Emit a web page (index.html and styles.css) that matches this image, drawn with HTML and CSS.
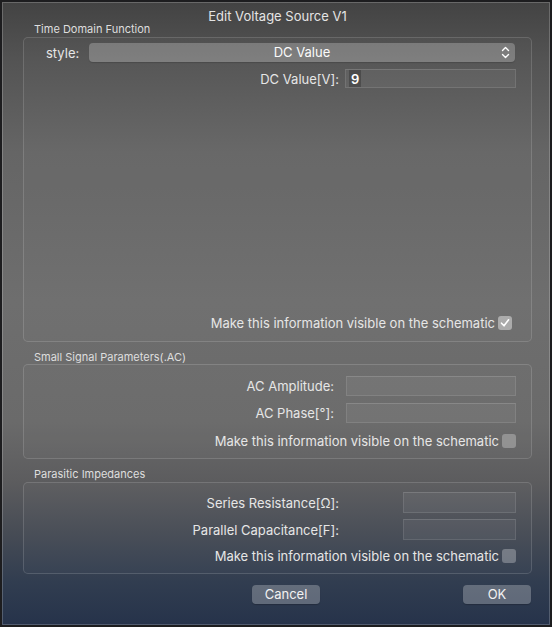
FILE: index.html
```html
<!DOCTYPE html>
<html lang="en">
    <head>
        <meta charset="utf-8">
        <title>Edit Voltage Source V1</title>
        <link rel="stylesheet" href="styles.css">
    </head>
    <body>
        <div class="window">
            <div class="title">Edit Voltage Source V1</div>

            <div class="group-label">Time Domain Function</div>
            <div class="group group-time">
                <div class="row-style">
                    <span class="style-label">style:</span>
                    <div class="popup">
                        DC Value
                        <svg class="chevrons" width="9" height="13" viewBox="0 0 9 13">
                            <path d="M1.5 4.5 L4.5 1.5 L7.5 4.5 M1.5 8.5 L4.5 11.5 L7.5 8.5" fill="none" stroke="#fff" stroke-width="1.4" stroke-linecap="round" stroke-linejoin="round"/>
                        </svg>
                    </div>
                </div>
                <div class="row row-dc">
                    <span class="label">DC Value[V]:</span>
                    <div class="field field-dc"><span class="sel">9</span></div>
                </div>
                <div class="check-row check-first">
                    <span>Make this information visible on the schematic</span>
                    <span class="checkbox checked">
                        <svg width="10" height="10" viewBox="0 0 10 10">
                            <path d="M1.5 5.2 L4 7.8 L8.6 1.8" fill="none" stroke="#fff" stroke-width="1.6" stroke-linecap="round" stroke-linejoin="round"/>
                        </svg>
                    </span>
                </div>
            </div>

            <div class="group-label">Small Signal Parameters(.AC)</div>
            <div class="group group-ac">
                <div class="row">
                    <span class="label">AC Amplitude:</span>
                    <div class="field field-ac"></div>
                </div>
                <div class="row row-next">
                    <span class="label">AC Phase[°]:</span>
                    <div class="field field-ac"></div>
                </div>
                <div class="check-row">
                    <span>Make this information visible on the schematic</span>
                    <span class="checkbox"></span>
                </div>
            </div>

            <div class="group-label">Parasitic Impedances</div>
            <div class="group group-par">
                <div class="row">
                    <span class="label label-par">Series Resistance[Ω]:</span>
                    <div class="field field-par"></div>
                </div>
                <div class="row row-next">
                    <span class="label label-par">Parallel Capacitance[F]:</span>
                    <div class="field field-par"></div>
                </div>
                <div class="check-row">
                    <span>Make this information visible on the schematic</span>
                    <span class="checkbox"></span>
                </div>
            </div>

            <div class="buttons">
                <div class="button cancel">Cancel</div>
                <div class="button ok">OK</div>
            </div>
        </div>
    </body>
</html>
```

FILE: styles.css
```css
body {
    margin: 0;
    font-family: Inter, "Liberation Sans", Arial, sans-serif;
    color: #e6e6e6;
}

.window {
    box-sizing: border-box;
    width: 552px;
    height: 627px;
    padding: 0 18px 0 21px;
    border: 2px solid #1d1d1f;
    box-shadow: inset 0 0 0 1px rgba(255, 255, 255, 0.2);
    background: linear-gradient(to bottom,
        #434343 0,
        #545454 60px,
        #656565 150px,
        #6e6e6e 300px,
        #6a6a6a 420px,
        #5c5c5e 480px,
        #474c55 530px,
        #313d50 580px,
        #25324a 627px);
    display: flex;
    flex-direction: column;
}

.title {
    margin-top: 7px;
    height: 14px;
    line-height: 14px;
    font-size: 13px;
    text-align: center;
    color: #e4e4e4;
}

.group-label {
    height: 12px;
    line-height: 12px;
    font-size: 11px;
    padding-left: 11px;
    margin-bottom: 2px;
    color: #dedede;
}

.group {
    box-sizing: border-box;
    border: 1px solid rgba(255, 255, 255, 0.14);
    border-radius: 5px;
    background: rgba(255, 255, 255, 0.02);
    display: flex;
    flex-direction: column;
    font-size: 13px;
}

.group-time {
    height: 305px;
    padding-top: 5px;
    padding-bottom: 11px;
}

.group-ac {
    height: 95px;
    padding-top: 11px;
}

.group-par {
    height: 92px;
    padding-top: 9px;
}

.group + .group-label {
    margin-top: 9px;
    margin-bottom: 1px;
}

.group-ac + .group-label {
    margin-bottom: 2px;
}

/* popup row */
.row-style {
    display: flex;
    align-items: center;
    height: 19px;
    padding-left: 22px;
    padding-right: 16px;
}

.style-label {
    width: 43px;
}

.popup {
    flex: 1;
    height: 19px;
    line-height: 19px;
    border-radius: 4px;
    background: rgba(255, 255, 255, 0.24);
    box-shadow: 0 1px 1px rgba(0, 0, 0, 0.15);
    text-align: center;
    color: #fafafa;
    position: relative;
}

.chevrons {
    position: absolute;
    right: 5px;
    top: 3px;
}

/* label + field rows */
.row {
    display: flex;
    justify-content: flex-end;
    align-items: center;
    padding-right: 15px;
}

.row-next {
    margin-top: 7px;
}

.row-dc {
    margin-top: 7px;
}

.label {
    margin-right: 12px;
}

.row-dc .label {
    margin-right: 6px;
}

.label-par {
    margin-right: 64px;
}

.field {
    box-sizing: border-box;
    height: 20px;
    background: rgba(255, 255, 255, 0.05);
    border: 1px solid rgba(255, 255, 255, 0.1);
    border-top-color: rgba(255, 255, 255, 0.14);
}

.field-dc {
    width: 171px;
    height: 19px;
    padding-left: 3px;
}

.field-ac {
    width: 170px;
}

.field-par {
    width: 113px;
    height: 21px;
}

.group-par .row-next {
    margin-top: 6px;
}

.sel {
    display: inline-block;
    height: 17px;
    line-height: 18px;
    padding: 0 2px;
    font-size: 13px;
    font-weight: 600;
    color: #fff;
    background: rgba(0, 0, 0, 0.22);
}

/* checkbox rows */
.check-row {
    display: flex;
    justify-content: flex-end;
    align-items: center;
    height: 15px;
    margin-top: 10px;
    padding-right: 15px;
}

.group-par .check-row {
    margin-top: 8px;
}

.check-first {
    margin-top: auto;
    padding-right: 19px;
}

.checkbox {
    box-sizing: border-box;
    width: 14px;
    height: 14px;
    margin-left: 3px;
    border-radius: 3px;
    background: rgba(255, 255, 255, 0.28);
    display: flex;
    align-items: center;
    justify-content: center;
}

.checkbox.checked {
    background: rgba(255, 255, 255, 0.42);
}

/* buttons */
.buttons {
    display: flex;
    justify-content: space-between;
    margin-top: 11px;
    padding-left: 229px;
    padding-right: 1px;
}

.button {
    width: 68px;
    height: 19px;
    line-height: 19px;
    border-radius: 4px;
    background: rgba(255, 255, 255, 0.25);
    box-shadow: 0 1px 1px rgba(0, 0, 0, 0.2);
    text-align: center;
    font-size: 13px;
    color: #f2f2f2;
}
```
